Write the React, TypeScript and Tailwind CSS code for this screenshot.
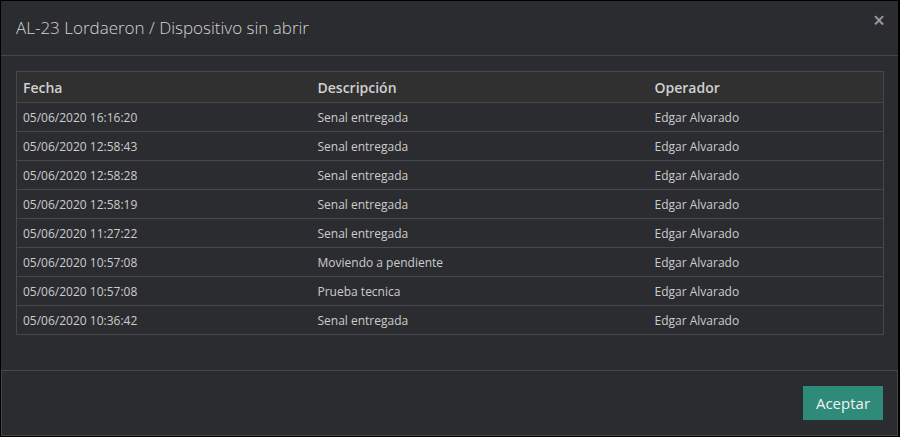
import React from "react"

const rows = [
  { fecha: "05/06/2020 16:16:20", desc: "Senal entregada", op: "Edgar Alvarado" },
  { fecha: "05/06/2020 12:58:43", desc: "Senal entregada", op: "Edgar Alvarado" },
  { fecha: "05/06/2020 12:58:28", desc: "Senal entregada", op: "Edgar Alvarado" },
  { fecha: "05/06/2020 12:58:19", desc: "Senal entregada", op: "Edgar Alvarado" },
  { fecha: "05/06/2020 11:27:22", desc: "Senal entregada", op: "Edgar Alvarado" },
  { fecha: "05/06/2020 10:57:08", desc: "Moviendo a pendiente", op: "Edgar Alvarado" },
  { fecha: "05/06/2020 10:57:08", desc: "Prueba tecnica", op: "Edgar Alvarado" },
  { fecha: "05/06/2020 10:36:42", desc: "Senal entregada", op: "Edgar Alvarado" },
]

const App: React.FC = () => {
  return (
    <div
      className="w-[900px] h-[437px] flex flex-col bg-[#2b2c30] border-t border-l border-b border-r-2 border-black text-[#cccccc]"
      style={{ fontFamily: '"Open Sans", sans-serif' }}
    >
      <div className="h-[55px] shrink-0 flex items-center justify-between pl-[15px] pr-[13px] border-b border-[#45464a]">
        <h4 className="text-[17px] font-light text-[#d4d4d4] -mt-[1px]">
          AL-23 Lordaeron / Dispositivo sin abrir
        </h4>
        <button className="text-[21px] font-semibold leading-none text-[#9a9a9a] -mt-[15px]">×</button>
      </div>
      <div className="flex-1 px-[15px] pt-[15px]">
        <table className="w-[868px] border-collapse border border-[#47484b] text-left table-fixed">
          <thead>
            <tr className="h-[31px] bg-[#303030]">
              <th className="w-[295px] px-[6px] text-[14px] font-semibold text-[#d0d0d0]">Fecha</th>
              <th className="w-[337px] px-[6px] text-[14px] font-semibold text-[#d0d0d0]">Descripción</th>
              <th className="px-[6px] text-[14px] font-semibold text-[#d0d0d0]">Operador</th>
            </tr>
          </thead>
          <tbody>
            {rows.map((r, i) => (
              <tr key={i} className="h-[29px] border-t border-[#47484b] text-[12px]">
                <td className="px-[6px] pt-[2px]">{r.fecha}</td>
                <td className="px-[6px] pt-[2px]">{r.desc}</td>
                <td className="px-[6px] pt-[2px]">{r.op}</td>
              </tr>
            ))}
          </tbody>
        </table>
      </div>
      <div className="h-[66px] shrink-0 flex items-center justify-end pr-[14px] border border-[#45464a]">
        <button className="w-[80px] h-[34px] bg-[#2f8b79] text-[15px] text-[#f2f2f2]">Aceptar</button>
      </div>
    </div>
  )
}

export default App
